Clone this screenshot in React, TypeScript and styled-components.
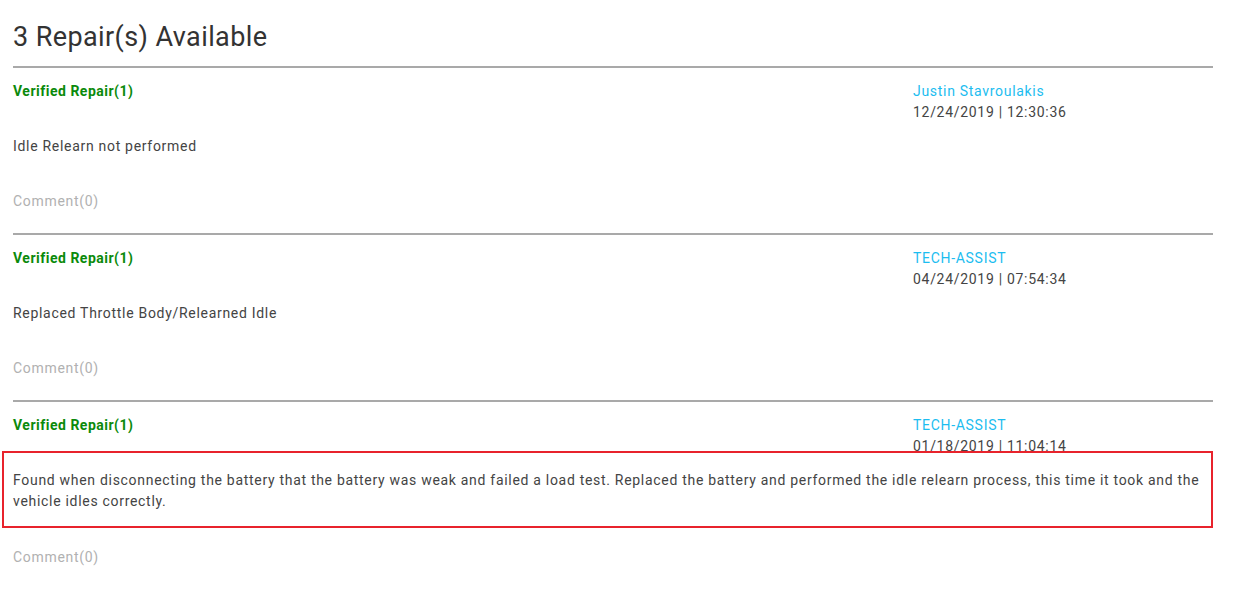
import styled, { createGlobalStyle } from "styled-components";

const GlobalStyle = createGlobalStyle`
  body {
    margin: 0;
    background: #fff;
    font-family: Roboto, "Liberation Sans", sans-serif;
    color: #444;
  }
`;

const Page = styled.div`
  width: 1200px;
  padding: 21px 0 0 13px;
`;

const Title = styled.h1`
  margin: 0 0 13px;
  font-size: 27px;
  line-height: 32px;
  font-weight: 400;
  letter-spacing: 0.4px;
  color: #333;
`;

const Section = styled.section`
  border-top: 2px solid #a9a9a9;
  padding: 13px 0 21px;
`;

const Header = styled.div`
  display: grid;
  grid-template-columns: 900px 1fr;
  font-size: 14px;
  line-height: 21px;
  letter-spacing: 0.7px;
`;

const Status = styled.div`
  color: #0b8a0b;
  font-weight: 700;
  letter-spacing: 0.5px;
`;

const Meta = styled.div`
  display: flex;
  flex-direction: column;
`;

const Author = styled.span`
  color: #1cbdf0;
`;

const Stamp = styled.span`
  color: #444;
`;

const Description = styled.p<{ $flagged?: boolean }>`
  position: relative;
  margin: 13px 0 0;
  font-size: 14px;
  line-height: 21px;
  letter-spacing: 0.7px;
  color: #444;
  background: #fff;
  ${(p) =>
    p.$flagged &&
    `
    border: 2px solid #e8232c;
    padding: 17px 8px 14px 9px;
    margin: -6px 0 -15px -11px;
  `}
`;

const Comment = styled.div`
  margin-top: 34px;
  font-size: 14px;
  line-height: 21px;
  letter-spacing: 0.7px;
  color: #b1b1b1;
`;

type Repair = {
  author: string;
  stamp: string;
  text: string;
  flagged?: boolean;
};

const repairs: Repair[] = [
  {
    author: "Justin Stavroulakis",
    stamp: "12/24/2019 | 12:30:36",
    text: "Idle Relearn not performed",
  },
  {
    author: "TECH-ASSIST",
    stamp: "04/24/2019 | 07:54:34",
    text: "Replaced Throttle Body/Relearned Idle",
  },
  {
    author: "TECH-ASSIST",
    stamp: "01/18/2019 | 11:04:14",
    text: "Found when disconnecting the battery that the battery was weak and failed a load test. Replaced the battery and performed the idle relearn process, this time it took and the vehicle idles correctly.",
    flagged: true,
  },
];

export default function App() {
  return (
    <Page>
      <GlobalStyle />
      <Title>{repairs.length} Repair(s) Available</Title>
      {repairs.map((r, i) => (
        <Section key={i}>
          <Header>
            <Status>Verified Repair(1)</Status>
            <Meta>
              <Author>{r.author}</Author>
              <Stamp>{r.stamp}</Stamp>
            </Meta>
          </Header>
          <Description $flagged={r.flagged}>{r.text}</Description>
          <Comment>Comment(0)</Comment>
        </Section>
      ))}
    </Page>
  );
}
